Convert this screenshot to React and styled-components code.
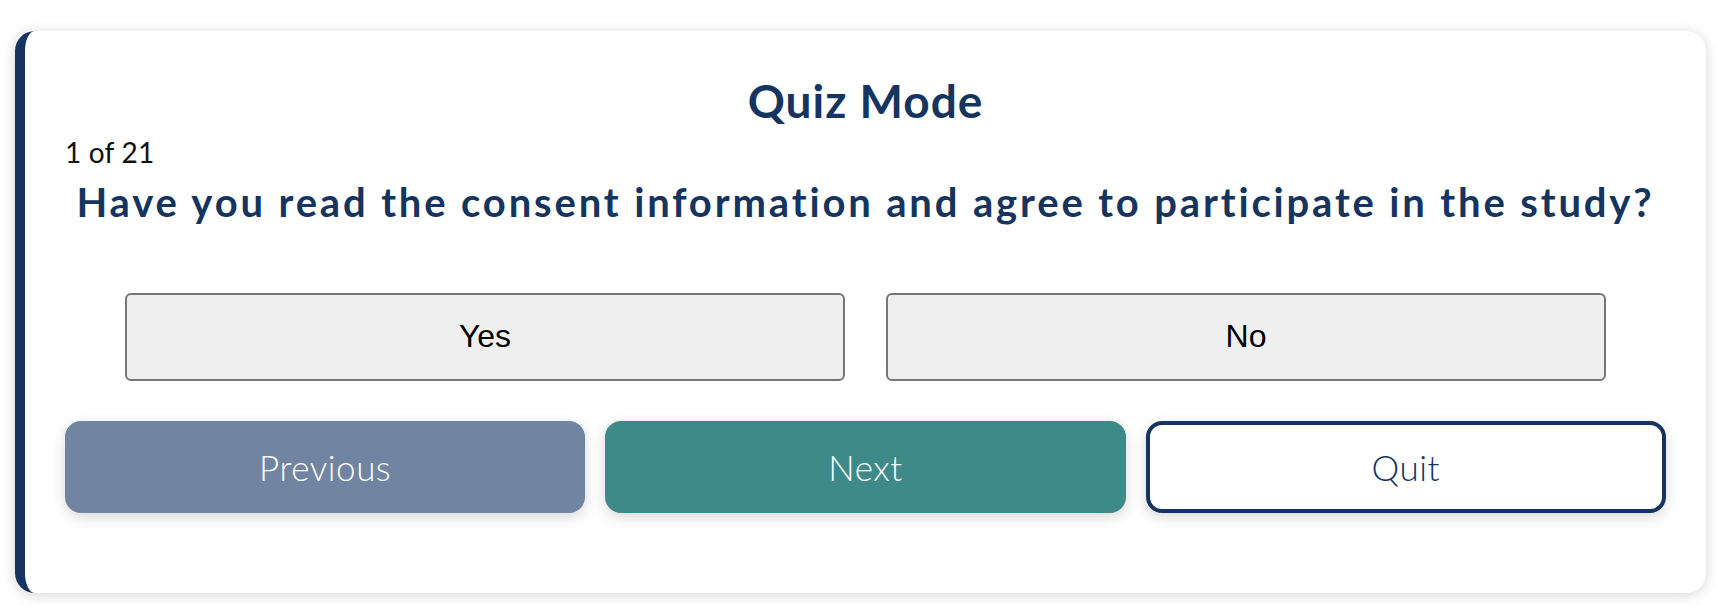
import React, { useState } from "react";
import styled, { createGlobalStyle } from "styled-components";

const GlobalStyle = createGlobalStyle`
  html, body {
    margin: 0;
    padding: 0;
    background: #ffffff;
  }
  body {
    font-family: "Lato", "Noto Sans", sans-serif;
  }
  * { box-sizing: border-box; }
`;

const navy = "#15345f";

const Page = styled.div`
  padding: 31px 9px 13px 15px;
`;

const Card = styled.section`
  background: #ffffff;
  border-left: 10px solid ${navy};
  border-radius: 20px;
  box-shadow: 0 2px 14px rgba(0, 0, 0, 0.16);
  padding: 42px 40px 80px 40px;
`;

const Title = styled.h1`
  margin: 0;
  text-align: center;
  font-family: "Lato", sans-serif;
  font-weight: 700;
  font-size: 46px;
  line-height: 1.2;
  letter-spacing: 1px;
  color: ${navy};
`;

const Counter = styled.div`
  margin-top: 8px;
  font-family: "Lato", sans-serif;
  font-weight: 400;
  font-size: 28px;
  line-height: 1.2;
  letter-spacing: 0.2px;
  color: #111111;
`;

const Question = styled.h2`
  margin: 8px 0 0;
  text-align: center;
  font-family: "Lato", sans-serif;
  font-weight: 700;
  font-size: 40px;
  line-height: 1.2;
  letter-spacing: 2.85px;
  color: ${navy};
`;

const Options = styled.div`
  display: grid;
  grid-template-columns: 1fr 1fr;
  column-gap: 41px;
  padding: 0 60px;
  margin-top: 67px;
`;

const OptionButton = styled.button`
  height: 88px;
  background: ${(p) => (p.$selected ? "#e2e6ee" : "#efefef")};
  border: 2px solid #767676;
  border-radius: 6px;
  font-family: "Liberation Sans", Arial, sans-serif;
  font-size: 32px;
  color: #000000;
  cursor: pointer;
`;

const Nav = styled.div`
  display: grid;
  grid-template-columns: repeat(3, 1fr);
  column-gap: 20px;
  margin-top: 40px;
`;

const variants = {
  previous: { bg: "#7184a1", fg: "#ffffff", border: "#7184a1" },
  next: { bg: "#3d8a88", fg: "#ffffff", border: "#3d8a88" },
  quit: { bg: "#ffffff", fg: navy, border: navy },
};

const NavButton = styled.button`
  height: 92px;
  border-radius: 16px;
  background: ${(p) => variants[p.$variant].bg};
  color: ${(p) => variants[p.$variant].fg};
  border: 4px solid ${(p) => variants[p.$variant].border};
  box-shadow: 0 4px 14px rgba(0, 0, 0, 0.16);
  font-family: "Lato", sans-serif;
  font-weight: 300;
  font-size: 35px;
  letter-spacing: 0.5px;
  cursor: pointer;
`;

export default function App() {
  const [answer, setAnswer] = useState(null);
  return (
    <>
      <GlobalStyle />
      <Page>
        <Card>
          <Title>Quiz Mode</Title>
          <Counter>1 of 21</Counter>
          <Question>
            Have you read the consent information and agree to participate in the study?
          </Question>
          <Options>
            <OptionButton $selected={answer === "Yes"} onClick={() => setAnswer("Yes")}>
              Yes
            </OptionButton>
            <OptionButton $selected={answer === "No"} onClick={() => setAnswer("No")}>
              No
            </OptionButton>
          </Options>
          <Nav>
            <NavButton $variant="previous">Previous</NavButton>
            <NavButton $variant="next">Next</NavButton>
            <NavButton $variant="quit">Quit</NavButton>
          </Nav>
        </Card>
      </Page>
    </>
  );
}
